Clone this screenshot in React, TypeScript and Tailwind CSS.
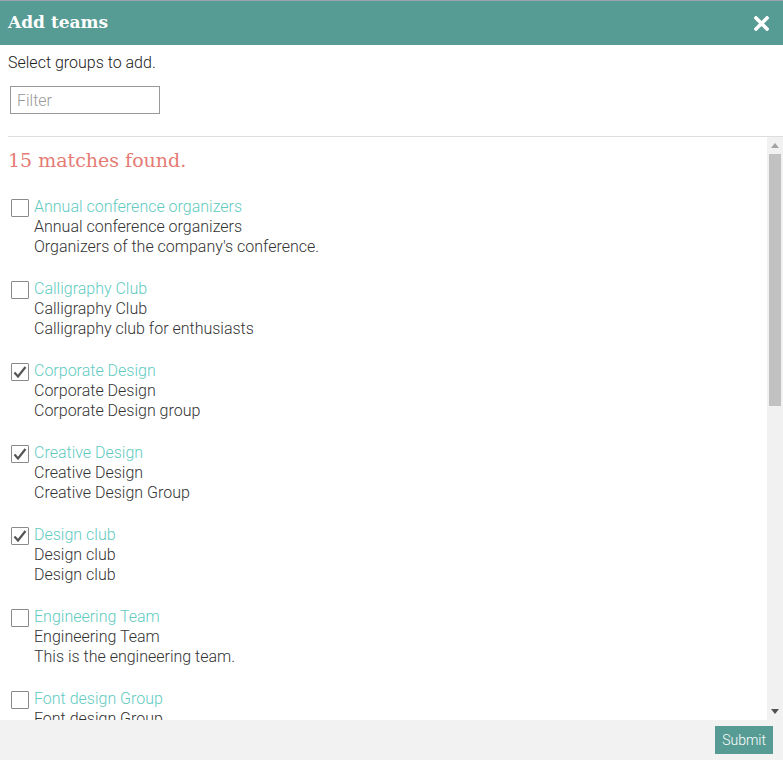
import { useState } from "react";

type Team = {
  name: string;
  description: string;
  checked?: boolean;
};

const teams: Team[] = [
  { name: "Annual conference organizers", description: "Organizers of the company's conference." },
  { name: "Calligraphy Club", description: "Calligraphy club for enthusiasts" },
  { name: "Corporate Design", description: "Corporate Design group", checked: true },
  { name: "Creative Design", description: "Creative Design Group", checked: true },
  { name: "Design club", description: "Design club", checked: true },
  { name: "Engineering Team", description: "This is the engineering team." },
  { name: "Font design Group", description: "Font design Group" },
  { name: "Graphic Designers", description: "Graphic designers of the company" },
  { name: "Human Resources", description: "HR team" },
  { name: "Illustration Team", description: "Illustrators" },
  { name: "Marketing", description: "Marketing department" },
  { name: "Photography Club", description: "Photography club for enthusiasts" },
  { name: "Product Design", description: "Product Design group" },
  { name: "Typography Group", description: "Typography lovers" },
  { name: "UX Research", description: "User experience research team" },
];

const Checkbox = ({ checked, onClick }: { checked: boolean; onClick: () => void }) => (
  <button
    type="button"
    onClick={onClick}
    className="mt-[2px] flex h-[18px] w-[18px] shrink-0 items-center justify-center rounded-[1px] border border-[#8a8a8a] bg-white"
  >
    {checked && (
      <svg width="16" height="16" viewBox="0 0 16 16">
        <path d="M2.5 8.5 L6 12.5 L13.5 3" fill="none" stroke="#555" strokeWidth="2.2" />
      </svg>
    )}
  </button>
);

export default function App() {
  const [selected, setSelected] = useState<boolean[]>(teams.map((t) => !!t.checked));

  const toggle = (i: number) =>
    setSelected((prev) => prev.map((v, j) => (j === i ? !v : v)));

  return (
    <div
      className="flex h-[760px] flex-col bg-white text-[#333]"
      style={{ fontFamily: "Roboto, 'Noto Sans', sans-serif" }}
    >
      <div className="h-px bg-[#9aa3b0]" />
      <div className="flex h-[44px] shrink-0 items-center justify-between bg-[#579c94] pl-2 pr-[14px]">
        <h1 className="text-[17px] font-bold text-white" style={{ fontFamily: "'DejaVu Serif', serif" }}>
          Add teams
        </h1>
        <svg width="15" height="15" viewBox="0 0 15 15">
          <path d="M2 2 L13 13 M13 2 L2 13" stroke="#fff" strokeWidth="3.6" strokeLinecap="square" />
        </svg>
      </div>

      <div className="shrink-0 px-2 pt-[8px]">
        <p className="text-[16px] font-light leading-[20px] text-[#222]">Select groups to add.</p>
        <input
          placeholder="Filter"
          className="ml-[2px] mt-[13px] h-[28px] w-[150px] border border-[#999] px-[6px] text-[16px] font-light outline-none placeholder:text-[#999]"
        />
      </div>

      <div className="ml-2 mt-[22px] flex min-h-0 flex-1 border-t border-[#ddd]">
        <div className="min-h-0 flex-1 overflow-y-scroll pt-[9px] [scrollbar-width:none] [&::-webkit-scrollbar]:hidden">
          <h2
            className="text-[19px] leading-[28px] text-[#e57b73]"
            style={{ fontFamily: "'DejaVu Serif', serif" }}
          >
            15 matches found.
          </h2>
          <ul className="mt-[23px]">
            {teams.map((t, i) => (
              <li key={t.name} className="mb-[22px] flex gap-[5px] pl-[3px]">
                <Checkbox checked={selected[i]} onClick={() => toggle(i)} />
                <div className="text-[16px] font-light leading-[20px]">
                  <div className="text-[#5fcbbf]">{t.name}</div>
                  <div>{t.name}</div>
                  <div>{t.description}</div>
                </div>
              </li>
            ))}
          </ul>
        </div>
        {/* scrollbar track */}
        <div className="flex w-[16px] shrink-0 flex-col bg-[#f1f1f1]">
          <div className="flex h-[17px] items-center justify-center">
            <svg width="8" height="5" viewBox="0 0 8 5">
              <path d="M0 5 L4 0 L8 5 Z" fill="#a3a3a3" />
            </svg>
          </div>
          <div className="mx-[2px] h-[252px] bg-[#c1c1c1]" />
          <div className="flex-1" />
          <div className="flex h-[17px] items-center justify-center">
            <svg width="8" height="5" viewBox="0 0 8 5">
              <path d="M0 0 L8 0 L4 5 Z" fill="#505050" />
            </svg>
          </div>
        </div>
      </div>

      <div className="flex h-[40px] shrink-0 items-center justify-end bg-[#f2f2f2] pr-[10px]">
        <button className="h-[28px] bg-[#579c94] px-[7px] text-[14px] font-light text-white">Submit</button>
      </div>
    </div>
  );
}
